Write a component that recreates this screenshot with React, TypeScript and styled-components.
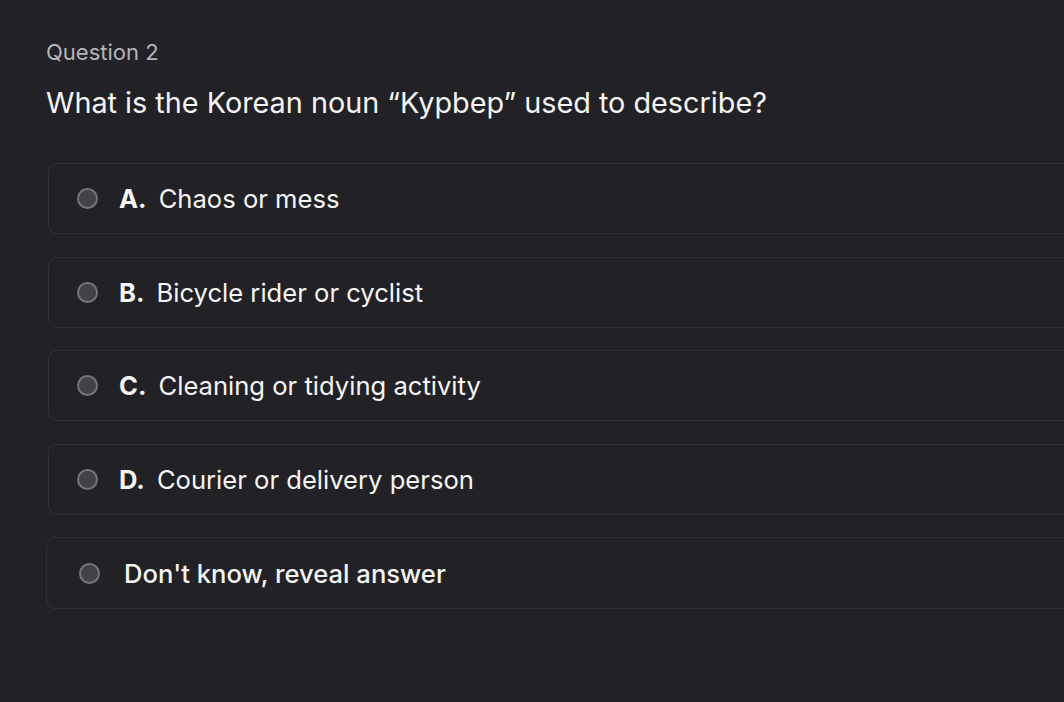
import React from 'react';
import styled, { createGlobalStyle } from 'styled-components';

const GlobalStyle = createGlobalStyle`
  html, body {
    margin: 0;
    padding: 0;
    background: #222226;
    overflow: hidden;
  }
  body {
    font-family: Inter, "Liberation Sans", sans-serif;
    color: #f2f2f2;
  }
`;

const Page = styled.div`
  width: 1120px;
  height: 702px;
  padding: 37px 0 0 46px;
  box-sizing: border-box;
`;

const Label = styled.div`
  font-size: 22px;
  color: #b4b4b8;
  line-height: 30px;
`;

const Title = styled.h1`
  margin: 17px 0 0 0;
  font-size: 28.8px;
  font-weight: 400;
  line-height: 38px;
  color: #f4f4f4;
`;

const Options = styled.div`
  display: flex;
  flex-direction: column;
  gap: 22.5px;
  margin-top: 41px;
`;

const Option = styled.label<{ $plain?: boolean }>`
  display: flex;
  align-items: center;
  height: ${(p) => (p.$plain ? '72px' : '71px')};
  box-sizing: border-box;
  margin-left: ${(p) => (p.$plain ? '0' : '2px')};
  padding-left: ${(p) => (p.$plain ? '32px' : '28px')};
  border: 1px solid #303036;
  border-radius: 9px;
  cursor: pointer;
`;

const Radio = styled.span`
  width: 17px;
  height: 17px;
  border-radius: 50%;
  border: 2px solid #75757a;
  background: #434347;
  flex-shrink: 0;
`;

const Letter = styled.span`
  font-weight: 700;
  margin-left: 21px;
  margin-right: 12px;
`;

const Text = styled.span<{ $plain?: boolean }>`
  font-size: 25.6px;
  color: #f4f4f4;
  margin-left: ${(p) => (p.$plain ? '24px' : '0')};
  font-weight: ${(p) => (p.$plain ? 500 : 400)};
`;

const options = [
  { letter: 'A.', text: 'Chaos or mess' },
  { letter: 'B.', text: 'Bicycle rider or cyclist' },
  { letter: 'C.', text: 'Cleaning or tidying activity' },
  { letter: 'D.', text: 'Courier or delivery person' },
];

export default function App() {
  return (
    <>
      <GlobalStyle />
      <Page>
        <Label>Question 2</Label>
        <Title>What is the Korean noun “Kypbep” used to describe?</Title>
        <Options>
          {options.map((o) => (
            <Option key={o.letter}>
              <Radio />
              <Text>
                <Letter>{o.letter}</Letter>
                {o.text}
              </Text>
            </Option>
          ))}
          <Option $plain>
            <Radio />
            <Text $plain>Don't know, reveal answer</Text>
          </Option>
        </Options>
      </Page>
    </>
  );
}
